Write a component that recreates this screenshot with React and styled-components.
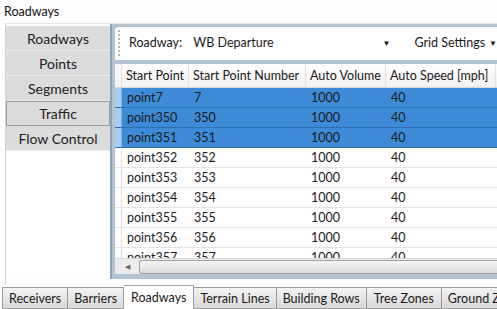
import React from 'react';
import styled, { createGlobalStyle } from 'styled-components';

const GlobalStyle = createGlobalStyle`
  html, body {
    margin: 0;
    padding: 0;
    background: #ffffff;
  }
  body {
    font-family: Lato, "Noto Sans", sans-serif;
    color: #1a1a1a;
  }
`;

const Window = styled.div`
  width: 497px;
  height: 309px;
  display: flex;
  flex-direction: column;
  overflow: hidden;
  background: #fdfdfd;
`;

const TitleBar = styled.div`
  height: 23px;
  padding-left: 4px;
  display: flex;
  align-items: center;
  font-size: 12.5px;
  color: #111;
`;

const Body = styled.div`
  flex: 1;
  display: flex;
  margin-left: 5px;
  border-left: 1px solid #d4d4d4;
  border-top: 1px solid #e4e4e4;
  padding-bottom: 6px;
  min-height: 0;
`;

const SideNav = styled.div`
  width: 104px;
  flex-shrink: 0;
  display: flex;
  flex-direction: column;
  padding-top: 2px;
  background: #ffffff;
`;

const NavButton = styled.div`
  height: 25px;
  box-sizing: border-box;
  display: flex;
  align-items: center;
  justify-content: center;
  font-size: 14px;
  color: #222;
  background: #dcdcdc;
  border: ${(p) => (p.active ? '1px solid #9c9c9c' : 'none')};
  border-bottom: ${(p) => (p.active ? '1px solid #9c9c9c' : '1px solid #ececec')};
`;

const Pane = styled.div`
  flex: 1;
  min-width: 0;
  display: flex;
  flex-direction: column;
  background: #b4c3d1;
  border-left: 2px solid #8fa2b5;
  padding: 3px 0 5px 3px;
`;

const Toolbar = styled.div`
  height: 33px;
  flex-shrink: 0;
  display: flex;
  align-items: center;
  background: #ffffff;
  border-top-left-radius: 4px;
  margin-bottom: 4px;
  padding-left: 3px;
  padding-bottom: 2px;
  box-sizing: border-box;
  font-size: 12.5px;
`;

const Grip = styled.div`
  width: 2px;
  height: 26px;
  border-left: 2px dotted #b8b8b8;
  margin-right: 7px;
`;

const Label = styled.span`
  width: 66px;
`;

const Combo = styled.div`
  width: 202px;
  display: flex;
  align-items: center;
  justify-content: space-between;
  padding-right: 8px;
`;

const Arrow = styled.span`
  font-size: 8px;
  margin-left: ${(p) => p.gap || 0}px;
`;

const Settings = styled.div`
  margin-left: 16px;
  display: flex;
  align-items: center;
  white-space: nowrap;
`;

const Grid = styled.div`
  flex: 1;
  min-height: 0;
  display: flex;
  flex-direction: column;
  background: #ffffff;
  overflow: hidden;
`;

const Rows = styled.div`
  flex: 1;
  min-height: 0;
  overflow: hidden;
`;

const Row = styled.div`
  display: grid;
  grid-template-columns: 7px 67px 117px 80px 110px;
  height: ${(p) => (p.header ? '24px' : '20px')};
  box-sizing: border-box;
  font-size: 12.5px;
  background: ${(p) =>
    p.header ? 'linear-gradient(#ffffff, #f1f1f1)' : p.selected ? '#3d8ad6' : '#ffffff'};
  border-bottom: 1px solid
    ${(p) => (p.header ? '#d6d6d6' : p.selected ? '#2d6fb4' : '#e3e3e3')};
`;

const Cell = styled.div`
  display: flex;
  align-items: center;
  padding-left: ${(p) => (p.header ? 4 : 5)}px;
  white-space: nowrap;
  overflow: hidden;
  color: #1a1a1a;
  border-right: ${(p) => (p.header ? '1px solid #e2e2e2' : 'none')};
`;

const RowHead = styled.div`
  background: ${(p) => (p.selected ? '#a6cdf2' : p.header ? '#f6f6f6' : '#ffffff')};
  border-right: 1px solid ${(p) => (p.selected ? '#7fb3e6' : '#dedede')};
`;

const HScroll = styled.div`
  height: 15px;
  flex-shrink: 0;
  display: flex;
  align-items: center;
  background: #ececec;
  border-top: 1px solid #d8d8d8;
`;

const ScrollArrow = styled.div`
  width: 24px;
  display: flex;
  justify-content: center;
  font-size: 7px;
  color: #666;
`;

const Thumb = styled.div`
  flex: 1;
  height: 12px;
  border: 1px solid #a2a2a2;
  border-right: none;
  border-radius: 3px 0 0 3px;
  background: linear-gradient(#f6f6f6, #dadada);
`;

const TabStrip = styled.div`
  height: 24px;
  flex-shrink: 0;
  display: flex;
  align-items: flex-end;
  padding-left: 2px;
  background: #ffffff;
`;

const Tab = styled.div`
  height: ${(p) => (p.active ? '24px' : '22px')};
  padding: 0 ${(p) => p.pad}px;
  box-sizing: border-box;
  display: flex;
  align-items: center;
  white-space: nowrap;
  font-size: 12.5px;
  color: #1a1a1a;
  background: ${(p) => (p.active ? '#ffffff' : 'linear-gradient(#f3f3f3, #d9d9d9)')};
  border: 1px solid #9d9d9d;
  border-bottom: ${(p) => (p.active ? 'none' : '1px solid #9d9d9d')};
  border-left: ${(p) => (p.first ? '1px solid #9d9d9d' : 'none')};
  flex-shrink: 0;
`;

const navItems = ['Roadways', 'Points', 'Segments', 'Traffic', 'Flow Control'];

const points = [
  ['point7', '7', true],
  ['point350', '350', true],
  ['point351', '351', true],
  ['point352', '352'],
  ['point353', '353'],
  ['point354', '354'],
  ['point355', '355'],
  ['point356', '356'],
  ['point357', '357'],
];

const tabs = [
  ['Receivers', 6],
  ['Barriers', 6],
  ['Roadways', 7, true],
  ['Terrain Lines', 6],
  ['Building Rows', 6],
  ['Tree Zones', 7],
  ['Ground Zones', 6],
];

export default function App() {
  return (
    <>
      <GlobalStyle />
      <Window>
        <TitleBar>Roadways</TitleBar>
        <Body>
          <SideNav>
            {navItems.map((n) => (
              <NavButton key={n} active={n === 'Traffic'}>
                {n}
              </NavButton>
            ))}
          </SideNav>
          <Pane>
            <Toolbar>
              <Grip />
              <Label>Roadway:</Label>
              <Combo>
                <span>WB Departure</span>
                <Arrow>▼</Arrow>
              </Combo>
              <Settings>
                Grid Settings
                <Arrow gap={4}>▼</Arrow>
              </Settings>
            </Toolbar>
            <Grid>
              <Row header>
                <RowHead header />
                <Cell header>Start Point</Cell>
                <Cell header>Start Point Number</Cell>
                <Cell header>Auto Volume</Cell>
                <Cell header>Auto Speed [mph]</Cell>
              </Row>
              <Rows>
                {points.map(([name, num, sel]) => (
                  <Row key={name} selected={sel}>
                    <RowHead selected={sel} />
                    <Cell>{name}</Cell>
                    <Cell>{num}</Cell>
                    <Cell>1000</Cell>
                    <Cell>40</Cell>
                  </Row>
                ))}
              </Rows>
              <HScroll>
                <ScrollArrow>◀</ScrollArrow>
                <Thumb />
              </HScroll>
            </Grid>
          </Pane>
        </Body>
        <TabStrip>
          {tabs.map(([t, pad, active], i) => (
            <Tab key={t} pad={pad} active={active} first={i === 0}>
              {t}
            </Tab>
          ))}
        </TabStrip>
      </Window>
    </>
  );
}
